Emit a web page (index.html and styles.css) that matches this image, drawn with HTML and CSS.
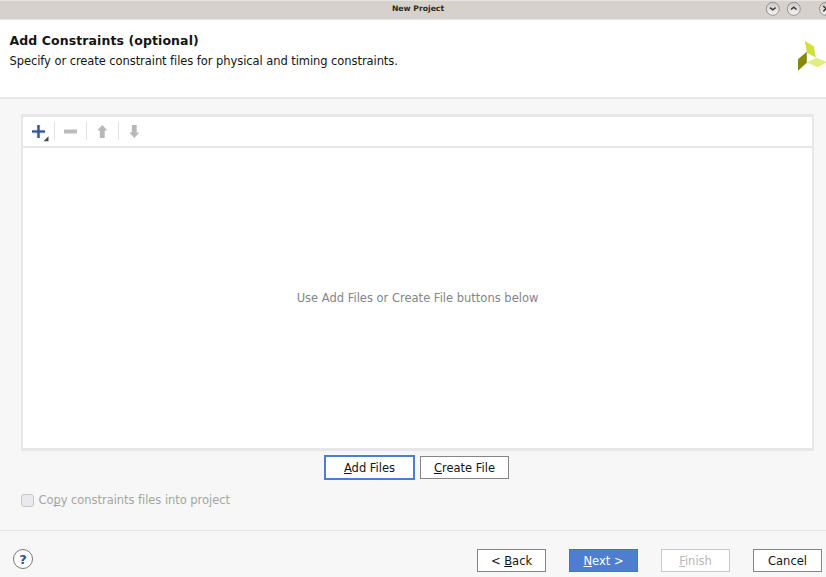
FILE: index.html
```html
<!DOCTYPE html>
<html lang="en">
<head>
<meta charset="utf-8">
<title>New Project</title>
<link rel="stylesheet" href="styles.css">
</head>
<body>
<div class="dialog">
  <div class="titlebar">
    <span class="window-title">New Project</span>
    <svg class="window-controls" width="64" height="19" viewBox="0 0 64 19">
      <defs>
        <linearGradient id="knob" x1="0" y1="0" x2="0" y2="1"><stop offset="0" stop-color="#c9c6c3"/><stop offset="1" stop-color="#f8f7f6"/></linearGradient>
      </defs>
      <g fill="url(#knob)" stroke="#96918d" stroke-width="1">
        <circle cx="10.8" cy="8.8" r="6.5"/><circle cx="31.8" cy="8.8" r="6.5"/><circle cx="64" cy="8.8" r="6.5"/>
      </g>
      <g fill="none" stroke="#3c3a39" stroke-width="1.5">
        <path d="M8 7.6l2.8 2.3 2.8-2.3M29 9.5l2.8-2.3 2.8 2.3M61.3 6l5.4 5.4M61.3 11.4l5.4-5.4"/>
      </g>
    </svg>
  </div>
  <header class="header">
    <div>
      <h1 class="heading">Add Constraints (optional)</h1>
      <p class="description">Specify or create constraint files for physical and timing constraints.</p>
    </div>
    <svg class="logo" width="28" height="30" viewBox="0 0 28 30">
      <path d="M6.8 0l9 5.3 2 11.4-8.9-5.2z" fill="#d2df3c"/>
      <path d="M0 18.2l8.8-7.4v11L0 29.8z" fill="#848a08"/>
      <path d="M8.8 21.6l9.7-4.9L29 21.3l-9.5 4.9z" fill="#e3ec80"/>
    </svg>
  </header>
  <main class="content">
    <section class="panel">
      <div class="toolbar">
        <svg width="130" height="30" viewBox="0 0 130 30">
          <path d="M9 14.5h13M15.5 8v13" fill="none" stroke="#c0cce5" stroke-width="3.4"/>
          <path d="M9 14.5h13M15.5 8v13" fill="none" stroke="#34528f" stroke-width="2.2"/>
          <path d="M25.5 19.3v5h-5z" fill="#4b4b4b"/>
          <path d="M31.5 5v18M63.5 5v18M95.5 5v18" stroke="#e3e3e3"/>
          <path d="M41 12.5h13v4H41z" fill="#bbb"/>
          <path d="M79.3 8l5 5.5h-2.6V21h-4.9v-7.5h-2.6z" fill="#b8b8b8"/>
          <path d="M111.3 21l5-5.5h-2.6V8h-4.9v7.5h-2.6z" fill="#b8b8b8"/>
        </svg>
      </div>
      <div class="empty"><span>Use Add Files or Create File buttons below</span></div>
    </section>
    <div class="file-actions">
      <button class="button focused"><span><u>A</u>dd Files</span></button>
      <button class="button"><span><u>C</u>reate File</span></button>
    </div>
    <div class="copy-option"><i class="checkbox"></i><span>Co<u>p</u>y constraints files into project</span></div>
  </main>
  <footer class="footer">
    <button class="help">?</button>
    <div class="navigation">
      <button class="button"><span>&lt; <u>B</u>ack</span></button>
      <button class="button primary"><span><u>N</u>ext &gt;</span></button>
      <button class="button disabled" disabled><span><u>F</u>inish</span></button>
      <button class="button"><span>Cancel</span></button>
    </div>
  </footer>
</div>
</body>
</html>
```
FILE: styles.css
```css
* { box-sizing: border-box; }
body { margin: 0; font: 11.5px/16px "DejaVu Sans", sans-serif; color: #151515; }
u { text-decoration-thickness: 1px; text-underline-offset: 1px; text-decoration-skip-ink: none; }
.dialog { width: 826px; height: 577px; display: flex; flex-direction: column; overflow: hidden; background: #f7f7f7; }
.titlebar { height: 20px; flex: none; display: grid; grid-template-columns: 1fr auto 1fr; background: #d6d1cd; border-top: 1px solid #e6e3e0; border-bottom: 1px solid #e7e4e1; }
.window-title { grid-column: 2; padding-left: 10px; font-size: 7.7px; line-height: 15px; font-weight: bold; color: #2b2928; }
.window-controls { justify-self: end; margin-top: -1px; }
.header { height: 79px; flex: none; display: flex; justify-content: space-between; padding: 13px 0 0 9.5px; background: #fff; border-bottom: 2px solid #e7e7e7; }
.heading { margin: 0; font-size: 12.5px; letter-spacing: .09px; line-height: 16px; }
.description { margin: 4px 0 0; letter-spacing: -.07px; }
.logo { margin-top: 8px; }
.content { height: 431px; flex: none; padding: 15px 12px 0 21px; }
.panel { height: 337px; background: #fff; border: 2px solid #e7e7e7; border-width: 3px 2px 3px 2px; }
.toolbar { height: 31px; border-bottom: 2px solid #e7e7e7; }
.toolbar svg { display: block; }
.empty { height: 300px; display: flex; align-items: center; justify-content: center; color: #858585; }
.button { width: 69px; height: 23px; padding: 0; display: flex; align-items: center; justify-content: center; font: inherit; color: #151515; background: #fff; border: 1px solid #858585; }
.file-actions { display: flex; align-items: center; gap: 5px; padding: 4px 0 0 303px; }
.file-actions .button { width: 89px; }
.file-actions .focused { width: 91px; height: 25px; border: 2px solid #4d7dd0; }
.copy-option { display: flex; align-items: center; gap: 4.5px; margin-top: 12px; letter-spacing: -.05px; color: #a5a5a5; }
.checkbox { width: 13px; height: 13px; background: #e9e9ee; border: 1px solid #c6c6c6; border-radius: 3px; }
.footer { flex: 1; display: flex; justify-content: space-between; padding: 18px 4px 0 13px; border-top: 1px solid #e5e5e5; }
.help { width: 20px; height: 20px; padding: 0; border: 1px solid #777; border-radius: 50%; background: #fff; color: #34528f; font: bold 13px/17px "DejaVu Sans", sans-serif; }
.navigation { display: flex; gap: 23px; }
.primary { background: #4f7dcf; border-color: #4674c5; color: #fff; }
.disabled { border-color: #c8c8c8; color: #b8b8b8; }
```
